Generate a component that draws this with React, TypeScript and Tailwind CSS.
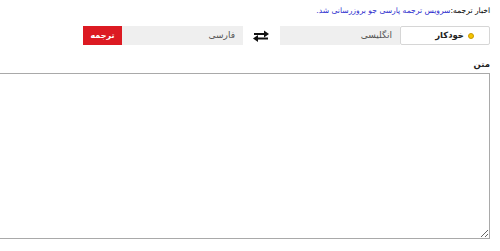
import React from "react";

function SwapIcon() {
  return (
    <svg width="18" height="12" viewBox="0 0 18 12" fill="none">
      <path d="M2 4h11" stroke="#111" strokeWidth="2" />
      <path d="M12 0.5 17 4 12 7.5Z" fill="#111" />
      <path d="M16 8.5H5" stroke="#111" strokeWidth="2" />
      <path d="M6 5 1 8.5 6 12Z" fill="#111" />
    </svg>
  );
}

export default function App() {
  return (
    <div
      dir="rtl"
      className="w-[500px] h-[251px] overflow-hidden bg-white pr-[10px] text-[9.5px] text-[#222]"
      style={{ fontFamily: '"DejaVu Sans", "Liberation Sans", sans-serif' }}
    >
      <div className="pt-[5px] h-[26px] leading-[12px] text-[7.6px]">
        <span className="text-black">اخبار ترجمه:</span>
        <span className="text-[#2a2acd]">سرویس ترجمه پارسی جو بروزرسانی شد.</span>
      </div>

      <div className="flex items-center h-[19px]">
        <div className="flex items-center gap-[4px] w-[90px] h-full bg-white border border-[#d6d6d6] rounded-[2px] pr-[15px] font-bold text-[8.5px]">
          <span className="w-[6px] h-[6px] rounded-full bg-[#f5c400] border border-[#c99a00]" />
          <span>خودکار</span>
        </div>
        <div className="flex items-center w-[120px] h-full bg-[#efefef] pr-[8px] text-[#555] text-[9px]">
          انگلیسی
        </div>
        <div className="flex items-center justify-center w-[18px] mr-[10px] ml-[9px]">
          <SwapIcon />
        </div>
        <div className="flex items-center w-[121px] h-full bg-[#efefef] pr-[8px] text-[#555] text-[9px]">
          فارسی
        </div>
        <button className="w-[39px] h-full bg-[#dc1a22] text-white font-bold text-[8px]">
          ترجمه
        </button>
      </div>

      <div className="mt-[13px] h-[15px] font-semibold leading-[12px] text-[8.5px]">متن</div>

      <div className="flex justify-start">
        <textarea
          dir="ltr"
          className="block shrink-0 w-[500px] h-[166px] border border-[#a9a9a9] bg-white resize outline-none"
        />
      </div>
    </div>
  );
}
